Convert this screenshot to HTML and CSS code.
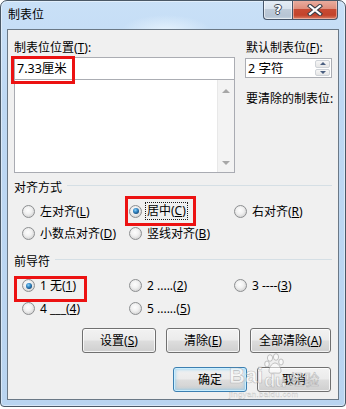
FILE: index.html
```html
<!DOCTYPE html>
<html lang="zh-CN">
<head>
<meta charset="utf-8">
<title>制表位</title>
<link rel="stylesheet" href="styles.css">
</head>
<body>
<div class="window">
  <div class="titlebar">
    <span class="title">制表位</span>
    <div class="caption">
      <div class="cbtn help"><span>?</span></div>
      <div class="cbtn close">
        <svg width="16" height="12" viewBox="0 0 16 12">
          <path d="M3 2 L13 10 M13 2 L3 10" stroke="#3a3f48" stroke-width="4.2" stroke-linecap="square" fill="none"/>
          <path d="M3 2 L13 10 M13 2 L3 10" stroke="#ffffff" stroke-width="2.2" stroke-linecap="square" fill="none"/>
        </svg>
      </div>
    </div>
  </div>
  <div class="client">
    <div class="top">
      <div class="leftcol">
        <div class="label">制表位位置(<u>T</u>):</div>
        <div class="edit"><span>7.33厘米</span><div class="mark mark-edit"></div></div>
        <div class="list">
          <div class="scroll"><i class="arr-up"></i><i class="arr-down"></i></div>
        </div>
      </div>
      <div class="rightcol">
        <div class="label">默认制表位(<u>F</u>):</div>
        <div class="spin">
          <span>2 字符</span>
          <div class="spinbtns">
            <div class="sb"><i class="tri-up"></i></div>
            <div class="sb"><i class="tri-down"></i></div>
          </div>
        </div>
        <div class="label clear-label">要清除的制表位:</div>
      </div>
    </div>

    <div class="group g1">
      <div class="ghead"><span>对齐方式</span><i class="gline"></i></div>
      <div class="radios">
        <div class="radio"><i class="rb"></i><span>左对齐(<u>L</u>)</span></div>
        <div class="radio"><i class="rb on"></i><span class="focus">居中(<u>C</u>)</span><div class="mark mark-center"></div></div>
        <div class="radio"><i class="rb"></i><span>右对齐(<u>R</u>)</span></div>
        <div class="radio"><i class="rb"></i><span>小数点对齐(<u>D</u>)</span></div>
        <div class="radio"><i class="rb"></i><span>竖线对齐(<u>B</u>)</span></div>
      </div>
    </div>

    <div class="group g2">
      <div class="ghead"><span>前导符</span><i class="gline"></i></div>
      <div class="radios tall">
        <div class="radio"><i class="rb on"></i><span>1 无(<u>1</u>)</span><div class="mark mark-none"></div></div>
        <div class="radio"><i class="rb"></i><span>2 .....(<u>2</u>)</span></div>
        <div class="radio"><i class="rb"></i><span>3 ----(<u>3</u>)</span></div>
        <div class="radio"><i class="rb"></i><span>4 ___(<u>4</u>)</span></div>
        <div class="radio"><i class="rb"></i><span>5 ......(<u>5</u>)</span></div>
      </div>
    </div>

    <div class="btnrow row1">
      <div class="btn w74">设置(<u>S</u>)</div>
      <div class="btn w74">清除(<u>E</u>)</div>
      <div class="btn w81">全部清除(<u>A</u>)</div>
    </div>
    <div class="btnrow row2">
      <div class="btn w74 default">确定</div>
      <div class="btn w74">取消</div>
    </div>
  </div>
  <div class="watermark">
    <div class="wm-top">
      <span class="wm-bai">Bai</span>
      <span class="wm-paw">
        <svg width="22" height="22" viewBox="0 0 22 22">
          <g fill="rgba(255,255,255,0.55)" stroke="rgba(150,150,150,0.55)" stroke-width="1">
            <ellipse cx="6" cy="5" rx="2.6" ry="3.3"/>
            <ellipse cx="12" cy="4" rx="2.6" ry="3.3"/>
            <ellipse cx="3" cy="11" rx="2.3" ry="3"/>
            <ellipse cx="17" cy="9" rx="2.3" ry="3"/>
            <path d="M5 18 C5 13 9 10 11 10 C14 10 17 14 17 18 C17 21 13 20 11 20 C8 20 5 21 5 18 Z"/>
          </g>
        </svg>
        <span class="wm-du">du</span>
      </span>
      <span class="wm-jy">经验</span>
    </div>
    <div class="wm-url">jingyan.baidu.com</div>
  </div>
</div>
</body>
</html>
```
FILE: styles.css
```css
html, body {
  margin: 0;
  padding: 0;
  background: #ffffff;
}
body {
  font-family: "Noto Sans", "Noto Sans CJK SC", sans-serif;
  font-size: 12px;
  color: #000;
}
u { text-decoration: underline; text-underline-offset: 1px; }

.window {
  position: relative;
  width: 346px;
  height: 407px;
  box-sizing: border-box;
  border: 1px solid #4a5866;
  border-radius: 7px 7px 4px 4px;
  background:
    radial-gradient(ellipse 45px 16px at 165px 30px, rgba(235,246,255,0.85), rgba(235,246,255,0) 100%),
    linear-gradient(180deg, #c9e0f7 0%, #bed8f3 25%, #b9d4f0 100%);
  box-shadow: inset 0 0 0 1px rgba(255,255,255,0.45);
  display: flex;
  flex-direction: column;
  overflow: hidden;
}

.titlebar {
  height: 28px;
  flex: none;
  display: flex;
  align-items: flex-start;
  padding-left: 7px;
}
.title {
  margin-top: 6px;
  line-height: 16px;
  font-size: 12px;
}
.caption {
  margin-left: auto;
  margin-right: 7px;
  margin-top: -1px;
  display: flex;
}
.cbtn {
  height: 20px;
  box-sizing: border-box;
  border: 1px solid #48566a;
  border-top: none;
  display: flex;
  align-items: center;
  justify-content: center;
}
.help {
  width: 29px;
  border-right: none;
  border-radius: 0 0 0 4px;
  background: linear-gradient(180deg, #e6eef7 0%, #d9e3ee 45%, #bfcbd9 50%, #b6c4d4 85%, #c9d6e3 100%);
  box-shadow: inset 0 0 0 1px rgba(255,255,255,0.55);
}
.help span {
  font-family: "DejaVu Sans", sans-serif;
  font-weight: bold;
  font-size: 13px;
  line-height: 14px;
  color: #ffffff;
  text-shadow: 1px 0 0 #3d4654, -1px 0 0 #3d4654, 0 1px 0 #3d4654, 0 -1px 0 #3d4654;
}
.close {
  width: 46px;
  border-radius: 0 0 4px 0;
  background: linear-gradient(180deg, #eab0a2 0%, #df8f7d 45%, #c74a33 50%, #c3432b 80%, #da8068 100%);
  box-shadow: inset 0 0 0 1px rgba(255,220,210,0.5);
}
.close svg { display: block; }

.client {
  flex: 1;
  margin: 0 6px 6px;
  box-sizing: border-box;
  border: 1px solid #6a7886;
  background: #f0f0f0;
  display: flex;
  flex-direction: column;
}

.top {
  display: flex;
  margin: 10px 0 0 6px;
}
.leftcol { width: 221px; }
.label {
  line-height: 15px;
  white-space: nowrap;
}
.edit {
  position: relative;
  margin-top: 2px;
  height: 23px;
  box-sizing: border-box;
  border: 1px solid #abadb3;
  background: #fff;
  padding-left: 2px;
  display: flex;
  align-items: center;
  line-height: 15px;
  font-size: 12.5px;
}
.list {
  height: 93px;
  box-sizing: border-box;
  border: 1px solid #a9abb2;
  border-top: none;
  background: #fff;
  display: flex;
  justify-content: flex-end;
}
.scroll {
  width: 17px;
  box-sizing: border-box;
  background: #f3f3f3;
  border-left: 1px solid #e8e8e8;
  display: flex;
  flex-direction: column;
  justify-content: space-between;
  align-items: center;
  padding: 9px 0 7px;
}
.arr-up, .arr-down {
  width: 0;
  height: 0;
  border-left: 4px solid transparent;
  border-right: 4px solid transparent;
}
.arr-up { border-bottom: 4px solid #a7a7a7; }
.arr-down { border-top: 4px solid #a7a7a7; }

.rightcol {
  margin-left: 10px;
  width: 87px;
}
.rightcol .label { padding-left: 1px; }
.spin {
  margin-top: 3px;
  height: 20px;
  box-sizing: border-box;
  border: 1px solid #abadb3;
  background: #fff;
  display: flex;
  align-items: center;
  padding-left: 2px;
  line-height: 15px;
  font-size: 12.5px;
}
.spinbtns {
  margin-left: auto;
  width: 16px;
  height: 100%;
  box-sizing: border-box;
  padding: 1px 1px 1px 0;
  display: flex;
  flex-direction: column;
  gap: 1px;
}
.sb {
  flex: 1;
  box-sizing: border-box;
  border: 1px solid #cfd3d8;
  border-radius: 2px;
  background: linear-gradient(180deg, #f6f6f6 0%, #e6e6e6 100%);
  display: flex;
  align-items: center;
  justify-content: center;
}
.tri-up, .tri-down {
  width: 0;
  height: 0;
  border-left: 3px solid transparent;
  border-right: 3px solid transparent;
}
.tri-up { border-bottom: 3px solid #4a5f80; }
.tri-down { border-top: 3px solid #4a5f80; }
.clear-label { margin-top: 13px; }

.group { display: flex; flex-direction: column; }
.g1 { margin-top: 7px; }
.g2 { margin-top: 10px; }
.ghead {
  display: flex;
  align-items: flex-start;
  margin: 0 6px;
  line-height: 15px;
}
.gline {
  flex: 1;
  height: 1px;
  background: #d5dfe5;
  margin: 5px 0 0 5px;
}
.radios {
  display: grid;
  grid-template-columns: 107px 105px auto;
  grid-auto-rows: 22px;
  margin: 5px 0 0 14px;
}
.radios.tall { grid-auto-rows: 23px; }
.radio {
  position: relative;
  display: flex;
  align-items: center;
  white-space: nowrap;
  line-height: 15px;
}
.rb {
  width: 13px;
  height: 13px;
  flex: none;
  box-sizing: border-box;
  border-radius: 50%;
  border: 1px solid #8d8f91;
  background: radial-gradient(circle at 45% 40%, #fdfdfd 0%, #f1f1f1 40%, #d7d7d7 75%, #c8c8c8 100%);
  margin-right: 5px;
  position: relative;
}
.rb.on::after {
  content: "";
  position: absolute;
  left: 2.5px;
  top: 2.5px;
  width: 6px;
  height: 6px;
  border-radius: 50%;
  background: radial-gradient(circle at 40% 35%, #8fd2f7 0%, #3a8fcc 35%, #124a7c 75%, #0b2f55 100%);
}
.focus {
  border: 1px dotted #1a1a1a;
  padding: 0 1px;
  margin-left: -2px;
  line-height: 16px;
}

.mark {
  position: absolute;
  box-sizing: border-box;
  border: 3px solid #ec1212;
  pointer-events: none;
}
.mark-edit { left: -4px; top: -2px; width: 64px; height: 28px; }
.mark-center { left: -4px; top: -4px; width: 71px; height: 30px; }
.mark-none { left: -8px; top: 2px; width: 73px; height: 26px; }

.btnrow {
  display: flex;
  justify-content: flex-end;
  gap: 10px;
  padding-right: 7px;
}
.row1 { margin-top: 8px; }
.row2 { margin-top: 14px; }
.btn {
  height: 25px;
  box-sizing: border-box;
  border: 1px solid #707070;
  border-radius: 3px;
  background: linear-gradient(180deg, #f2f2f2 0%, #ebebeb 48%, #dddddd 52%, #cfcfcf 100%);
  box-shadow: inset 0 0 0 1px rgba(255,255,255,0.75);
  display: flex;
  align-items: center;
  justify-content: center;
  line-height: 15px;
  white-space: nowrap;
}
.w74 { width: 74px; }
.w81 { width: 81px; }
.btn.default {
  border-color: #3c7fb1;
  box-shadow: inset 0 0 0 1px #c9eeff, inset 0 0 3px 2px rgba(120,200,245,0.55);
}

.watermark {
  position: absolute;
  left: 228px;
  top: 352px;
  width: 95px;
  pointer-events: none;
  color: rgba(255,255,255,0.6);
  font-family: "Liberation Sans", "Noto Sans CJK SC", sans-serif;
}
.wm-top {
  display: flex;
  align-items: flex-end;
}
.wm-bai, .wm-du, .wm-jy {
  font-weight: bold;
  -webkit-text-stroke: 0.6px rgba(140,140,140,0.55);
}
.wm-bai { font-size: 22px; line-height: 26px; }
.wm-paw {
  display: flex;
  flex-direction: column;
  align-items: center;
  margin-left: 1px;
}
.wm-paw svg { display: block; }
.wm-du { font-size: 18px; line-height: 16px; margin-top: -2px; }
.wm-jy {
  font-family: "Noto Sans CJK SC", sans-serif;
  font-size: 15px;
  line-height: 20px;
  margin-left: 3px;
  font-weight: normal;
}
.wm-url {
  font-size: 8px;
  line-height: 10px;
  margin-top: 1px;
  letter-spacing: 0.3px;
  -webkit-text-stroke: 0.3px rgba(140,140,140,0.5);
}
```
